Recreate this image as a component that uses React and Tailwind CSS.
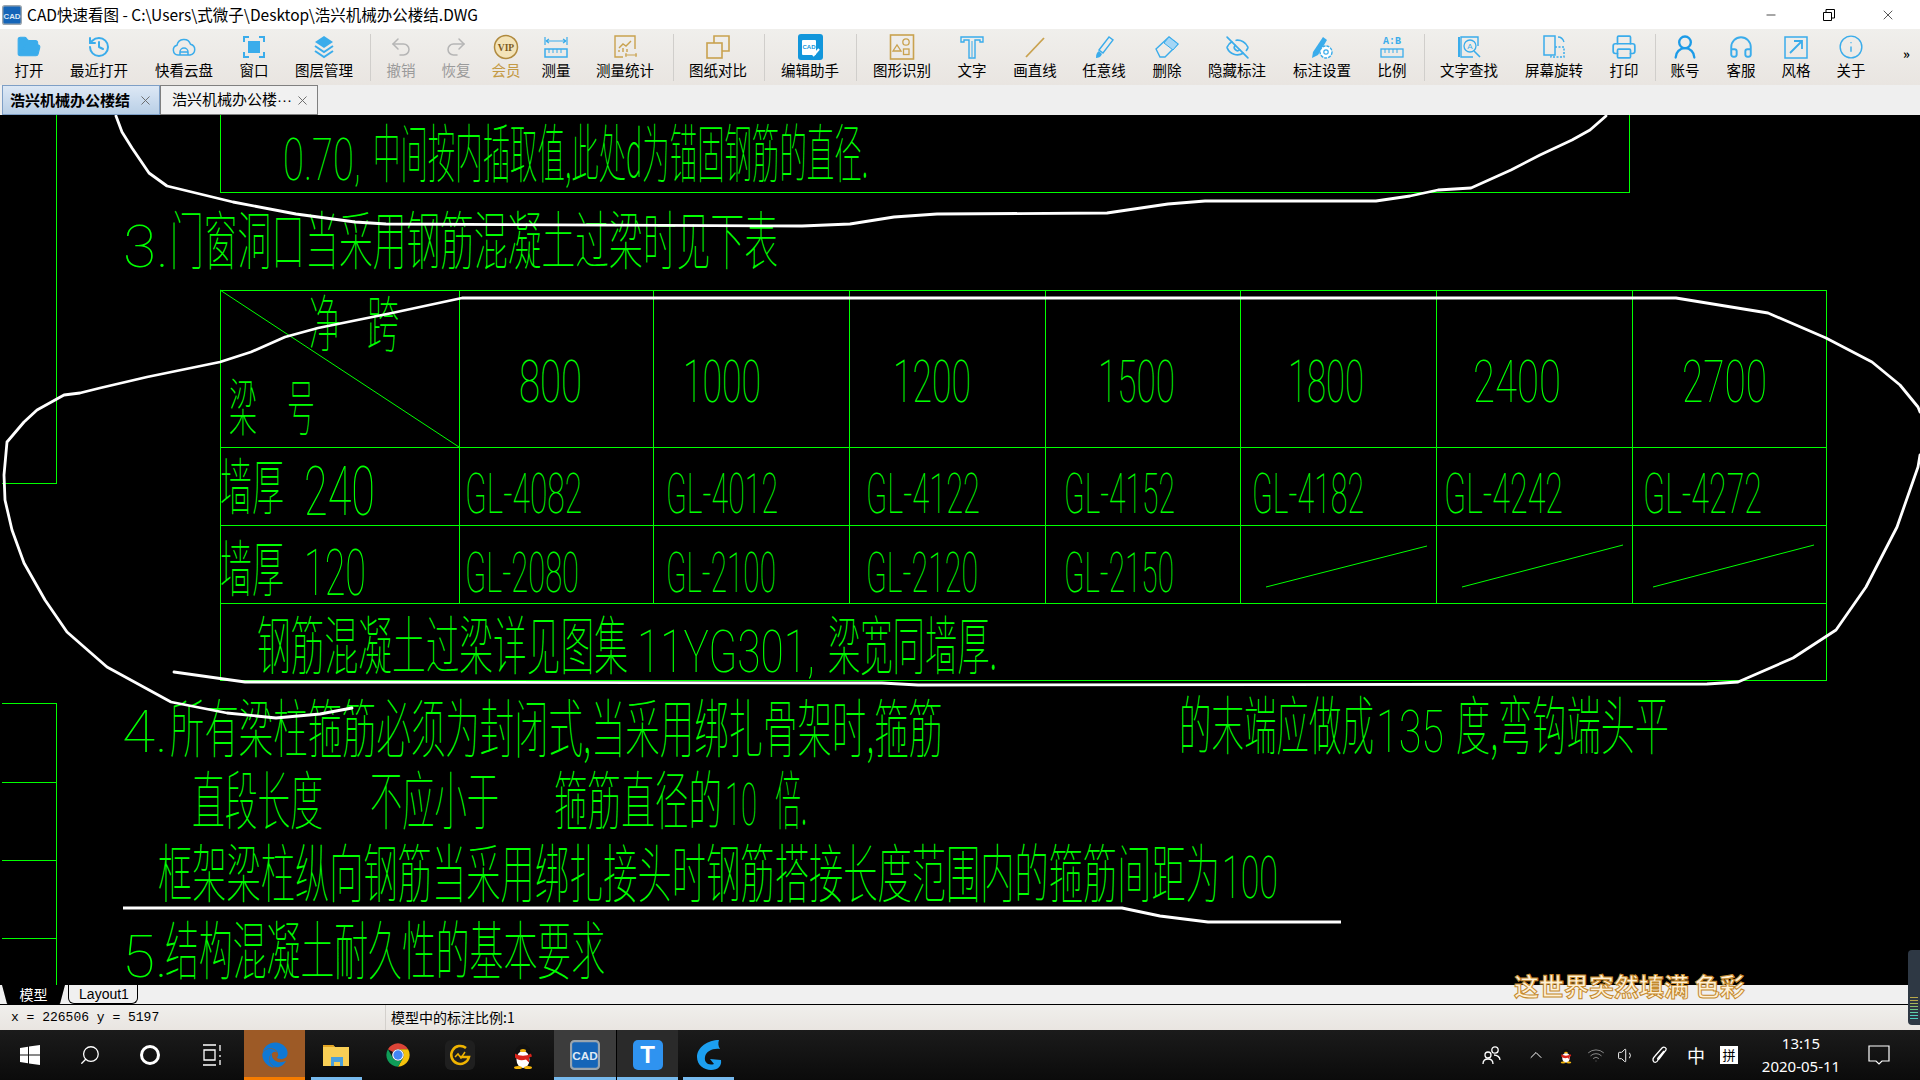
// CAD viewer window on a Windows 10 desktop
import {
  FolderOpen, History, Undo2, Redo2, EyeOff, Printer, UserRound, Headphones, Info, X, Minus,
  ChevronUp, Volume1, Search, Wifi,
} from 'lucide-react'
import { FaEdge } from 'react-icons/fa'

const UI_FONT = { fontFamily: '"Noto Sans CJK SC", "Liberation Sans", sans-serif' }
const BLUE = '#3aaceb'
const GOLD = '#c9a24f'

const Svg = ({ children, className = 'w-[26px] h-[26px]' }) => (
  <svg viewBox="0 0 26 26" className={className} fill="none" stroke={BLUE} strokeWidth="1.5">{children}</svg>
)

const icons = {
  open: <FolderOpen size={26} fill={BLUE} stroke={BLUE} strokeWidth={1} />,
  recent: <History size={24} stroke={BLUE} strokeWidth={2} />,
  cloud: (
    <Svg>
      <path d="M7 21a5 5 0 0 1-1-9.800 7 7 0 0 1 13.500-1A5.500 5.500 0 0 1 19 21Z" />
      <path d="M9 21v-3a4 4 0 0 1 8 0v3M9 18h8" />
    </Svg>
  ),
  window: (
    <Svg>
      <rect x="7" y="7" width="12" height="12" fill={BLUE} stroke="none" />
      <path d="M3 8V3h5M18 3h5v5M23 18v5h-5M8 23H3v-5" strokeWidth="2" />
    </Svg>
  ),
  layers: (
    <Svg>
      <path d="M13 2 22 8l-9 6-9-6Z" fill={BLUE} stroke="none" />
      <path d="m4 12 9 6 9-6M4 17l9 6 9-6" strokeWidth="2" />
    </Svg>
  ),
  undo: <Undo2 size={24} stroke="#b5b5b5" strokeWidth={1.5} />,
  redo: <Redo2 size={24} stroke="#b5b5b5" strokeWidth={1.5} />,
  vip: (
    <svg viewBox="0 0 26 26" className="w-[26px] h-[26px]">
      <circle cx="13" cy="13" r="11.500" fill="#f3e3b8" stroke="#b08a3e" strokeWidth="1.500" />
      <text x="13" y="16.500" textAnchor="middle" fontSize="9.500" fontWeight="700" fill="#7a5a20" fontFamily="Liberation Serif, serif">VIP</text>
    </svg>
  ),
  measure: (
    <Svg>
      <path d="M2 3v8M24 3v8M3 7h20M3 7l3-2M3 7l3 2M23 7l-3-2M23 7l-3 2" strokeWidth="1.200" />
      <rect x="2" y="15" width="22" height="8" />
      <path d="M6 15v4M10 15v4M14 15v4M18 15v4" strokeWidth="1" />
    </Svg>
  ),
  stats: (
    <svg viewBox="0 0 26 26" className="w-[26px] h-[26px]" fill="none" stroke={GOLD} strokeWidth="1.400">
      <path d="M11 23H3V2h20v13" />
      <path d="M7 14l4-4 3 2 5-5M7 18v-2M11 18v-4M15 18v-3" />
      <path d="M13 21h12M14 19v4M24 19v4" strokeWidth="1.100" />
    </svg>
  ),
  compare: (
    <svg viewBox="0 0 26 26" className="w-[26px] h-[26px]" fill="none" stroke={GOLD} strokeWidth="1.600">
      <path d="M9 9V2h15v15h-7" />
      <rect x="2" y="9" width="15" height="15" />
    </svg>
  ),
  helper: (
    <svg viewBox="0 0 26 26" className="w-[26px] h-[26px]">
      <rect x="1" y="0" width="25" height="26" rx="3" fill="#1296db" />
      <rect x="5" y="6" width="14" height="15" rx="1" fill="#fff" />
      <text x="12" y="15" textAnchor="middle" fontSize="6" fontWeight="700" fill="#1296db" fontFamily="Liberation Sans, sans-serif">CAD</text>
      <path d="m16 22 6-7" stroke="#fff" strokeWidth="2" />
    </svg>
  ),
  shapes: (
    <svg viewBox="0 0 26 26" className="w-[26px] h-[26px]" fill="none" stroke={GOLD} strokeWidth="1.300">
      <rect x="1.500" y="1" width="23" height="24" strokeWidth="1.600" />
      <path d="M4 17l4-6 4 6Z" />
      <circle cx="17" cy="8" r="3.200" />
      <rect x="14.500" y="15" width="5.500" height="5.500" />
    </svg>
  ),
  text: (
    <Svg>
      <path d="M2 8V3h22v5h-3V6h-5v18h-6V6H5v2Z" strokeWidth="1.400" />
      <path d="M13 7v16" strokeWidth="1" />
    </Svg>
  ),
  line: (
    <svg viewBox="0 0 26 26" className="w-[26px] h-[26px]">
      <path d="M4 23 22 4" stroke={GOLD} strokeWidth="1.800" />
    </svg>
  ),
  pen: (
    <Svg>
      <path d="m8 16 10-13 4 3-10 13Z" strokeWidth="1.400" />
      <path d="M8 17c-2 1-3 3-3 7 2 0 5-1 6-4Z" fill={BLUE} stroke="none" />
    </Svg>
  ),
  eraser: (
    <Svg>
      <path d="m2 15 13-12 9 7-13 13H6Z" strokeWidth="1.400" />
      <path d="m10 9 9 7 5-6-9-7Z" fill="#a5d6f5" stroke={BLUE} strokeWidth="1" />
    </Svg>
  ),
  hide: <EyeOff size={25} stroke={BLUE} strokeWidth={1.6} />,
  dimset: (
    <Svg>
      <path d="m3 24 1-6L14 3l4 3L9 21Z" fill={BLUE} stroke="none" />
      <circle cx="17" cy="18" r="6" fill="#fff" strokeWidth="1.400" strokeDasharray="3 1" />
      <circle cx="17" cy="18" r="2.200" strokeWidth="1.200" />
    </Svg>
  ),
  scale: (
    <svg viewBox="0 0 26 26" className="w-[26px] h-[26px]" fill="none" stroke={BLUE} strokeWidth="1.300">
      <text x="13" y="10" textAnchor="middle" fontSize="10" fontWeight="700" fill={BLUE} stroke="none" fontFamily="Liberation Mono, monospace">A:B</text>
      <rect x="2" y="15" width="22" height="8" />
      <path d="M6 15v4M10 15v4M14 15v4M18 15v4" strokeWidth="1" />
    </svg>
  ),
  find: (
    <Svg>
      <path d="M22 12V3H5v20h12" strokeWidth="1.400" />
      <path d="M3 3v20" strokeWidth="2" />
      <circle cx="14" cy="12" r="6" strokeWidth="1.300" />
      <text x="14" y="15" textAnchor="middle" fontSize="8" fill={BLUE} stroke="none" fontFamily="Liberation Sans, sans-serif">A</text>
      <path d="m18 17 6 6" strokeWidth="1.600" />
    </Svg>
  ),
  rotate: (
    <Svg>
      <rect x="3" y="2" width="11" height="19" />
      <path d="M14 13h9v10H10v-2" strokeDasharray="2 1.500" />
      <path d="M17 3c3 0 5 2 6 5" strokeWidth="1.300" />
    </Svg>
  ),
  print: <Printer size={26} stroke={BLUE} strokeWidth={1.6} />,
  user: <UserRound size={28} stroke="#1c9be8" strokeWidth={2} />,
  service: <Headphones size={26} stroke={BLUE} strokeWidth={1.8} />,
  style: (
    <Svg>
      <rect x="2" y="3" width="22" height="21" strokeWidth="1.500" />
      <path d="m7 19 12-12M11 7h8v8" strokeWidth="1.800" />
    </Svg>
  ),
  about: <Info size={26} stroke={BLUE} strokeWidth={1.3} />,
}

const tools = [
  { label: '打开', icon: 'open', w: 'w-[56px] ml-[1px]' },
  { label: '最近打开', icon: 'recent', w: 'w-[84px]' },
  { label: '快看云盘', icon: 'cloud', w: 'w-[86px]' },
  { label: '窗口', icon: 'window', w: 'w-[54px]' },
  { label: '图层管理', icon: 'layers', w: 'w-[86px]' },
  { sep: 'ml-[3px] mr-[2px]' },
  { label: '撤销', icon: 'undo', w: 'w-[56px]', tone: 'text-[#9a9a9a]' },
  { label: '恢复', icon: 'redo', w: 'w-[54px]', tone: 'text-[#9a9a9a]' },
  { label: '会员', icon: 'vip', w: 'w-[46px]', tone: 'text-[#c49a45]' },
  { label: '测量', icon: 'measure', w: 'w-[54px]' },
  { label: '测量统计', icon: 'stats', w: 'w-[84px]' },
  { sep: 'ml-[6px] mr-[2px]' },
  { label: '图纸对比', icon: 'compare', w: 'w-[84px]' },
  { sep: 'ml-[4px] mr-[1px]' },
  { label: '编辑助手', icon: 'helper', w: 'w-[88px]' },
  { sep: 'ml-[2px] mr-[1px]' },
  { label: '图形识别', icon: 'shapes', w: 'w-[88px]' },
  { label: '文字', icon: 'text', w: 'w-[52px]' },
  { label: '画直线', icon: 'line', w: 'w-[74px]' },
  { label: '任意线', icon: 'pen', w: 'w-[64px]' },
  { label: '删除', icon: 'eraser', w: 'w-[62px]' },
  { label: '隐藏标注', icon: 'hide', w: 'w-[78px]' },
  { label: '标注设置', icon: 'dimset', w: 'w-[92px]' },
  { label: '比例', icon: 'scale', w: 'w-[48px]' },
  { sep: 'ml-[8px] mr-[1px]' },
  { label: '文字查找', icon: 'find', w: 'w-[86px]' },
  { label: '屏幕旋转', icon: 'rotate', w: 'w-[84px]' },
  { label: '打印', icon: 'print', w: 'w-[56px]' },
  { sep: 'ml-[3px] mr-[1px]' },
  { label: '账号', icon: 'user', w: 'w-[56px]' },
  { label: '客服', icon: 'service', w: 'w-[56px]' },
  { label: '风格', icon: 'style', w: 'w-[54px]' },
  { label: '关于', icon: 'about', w: 'w-[56px]' },
]

// CAD text: real text squeezed to the width measured in the drawing
function CadText({ x, w, bottom, size, digits, children }) {
  return (
    <text
      x={x}
      y={bottom - size * (digits ? 0 : 0.1)}
      textLength={w}
      lengthAdjust="spacingAndGlyphs"
      fontSize={size}
      fontWeight="100"
      fontFamily={digits ? 'Roboto, "Liberation Sans", sans-serif' : '"Noto Sans CJK SC", sans-serif'}
      fill="#00ff00"
    >
      {children}
    </text>
  )
}

const Cjk = (p) => <CadText size={64} {...p} />
const Num = (p) => <CadText size={60} digits {...p} />

const headers = [
  ['800', 519, 63], ['1000', 683, 78], ['1200', 893, 78], ['1500', 1098, 77],
  ['1800', 1288, 76], ['2400', 1473, 88], ['2700', 1682, 85],
]
const row240 = [
  ['GL-4082', 465, 117], ['GL-4012', 666, 112], ['GL-4122', 866, 114], ['GL-4152', 1064, 111],
  ['GL-4182', 1252, 112], ['GL-4242', 1444, 119], ['GL-4272', 1643, 119],
]
const row120 = [['GL-2080', 465, 114], ['GL-2100', 666, 110], ['GL-2120', 866, 112], ['GL-2150', 1064, 110]]
const columns = [459, 653, 849, 1045, 1240, 1436, 1632]
const ticks = [782, 860, 938]

function CadDrawing() {
  return (
    <svg viewBox="0 115 1920 870" className="w-full h-full block">
      {/* frame lines */}
      <g stroke="#00ff00" strokeWidth="1" shapeRendering="crispEdges" fill="none">
        <path d="M56.500 115V483.500H2" />
        <path d="M2 703.500H56.500V985" />
        {ticks.map((y) => <path key={y} d={`M2 ${y + 0.5}H56`} />)}
        <path d="M220.500 115V192.500H1629.500V115" />
        <rect x="220.500" y="290.500" width="1606" height="390" />
        <path d="M220 447.500H1827M220 525.500H1827M220 603.500H1827" />
        {columns.map((x) => <path key={x} d={`M${x + 0.5} 290V603`} />)}
      </g>
      <g stroke="#00ff00" strokeWidth="1" fill="none">
        <path d="M220 290 459 447" />
        <path d="M1266 587 1427 546M1462 587 1623 545M1653 587 1814 545" />
      </g>

      {/* notes above the table */}
      <Num x={283} w={78} bottom={180}>0.70,</Num>
      <Cjk x={373} w={495} bottom={183}>中间按内插取值,此处d为锚固钢筋的直径.</Cjk>
      <Num x={123} w={46} bottom={267}>3.</Num>
      <Cjk x={170} w={608} bottom={270}>门窗洞口当采用钢筋混凝土过梁时见下表</Cjk>

      {/* table */}
      <CadText x={309} w={32} bottom={353} size={62}>净</CadText>
      <CadText x={367} w={32} bottom={353} size={62}>跨</CadText>
      <CadText x={229} w={28} bottom={437} size={62}>梁</CadText>
      <CadText x={287} w={28} bottom={437} size={62}>号</CadText>
      {headers.map(([t, x, w]) => <CadText key={t} digits x={x} w={w} bottom={402} size={60}>{t}</CadText>)}
      <CadText x={220} w={64} bottom={516} size={62}>墙厚</CadText>
      <Num x={304} w={71} bottom={515} size={68}>240</Num>
      {row240.map(([t, x, w]) => <CadText key={t} digits x={x} w={w} bottom={513} size={56}>{t}</CadText>)}
      <CadText x={220} w={64} bottom={598} size={62}>墙厚</CadText>
      <Num x={304} w={62} bottom={595} size={64}>120</Num>
      {row120.map(([t, x, w]) => <CadText key={t} digits x={x} w={w} bottom={592} size={56}>{t}</CadText>)}
      <Cjk x={257} w={371} bottom={675}>钢筋混凝土过梁详见图集</Cjk>
      <Num x={637} w={178} bottom={672}>11YG301,</Num>
      <Cjk x={828} w={169} bottom={675}>梁宽同墙厚.</Cjk>

      {/* notes below the table */}
      <Num x={122} w={46} bottom={752}>4.</Num>
      <Cjk x={170} w={773} bottom={758}>所有梁柱箍筋必须为封闭式,当采用绑扎骨架时,箍筋</Cjk>
      <Cjk x={1179} w={195} bottom={755}>的末端应做成</Cjk>
      <Num x={1376} w={68} bottom={752}>135</Num>
      <Cjk x={1456} w={213} bottom={755}>度,弯钩端头平</Cjk>
      <Cjk x={192} w={131} bottom={830}>直段长度</Cjk>
      <Cjk x={370} w={129} bottom={830}>不应小于</Cjk>
      <Cjk x={554} w={168} bottom={830}>箍筋直径的</Cjk>
      <Num x={725} w={32} bottom={825}>10</Num>
      <Cjk x={775} w={32} bottom={830}>倍.</Cjk>
      <Cjk x={158} w={1062} bottom={903}>框架梁柱纵向钢筋当采用绑扎接头时钢筋搭接长度范围内的箍筋间距为</Cjk>
      <Num x={1222} w={56} bottom={898}>100</Num>
      <Num x={122} w={46} bottom={977}>5.</Num>
      <Cjk x={165} w={440} bottom={980}>结构混凝土耐久性的基本要求</Cjk>

      {/* hand drawn white strokes */}
      <g fill="none" stroke="#fff" strokeLinejoin="round" strokeLinecap="round">
        <polyline strokeWidth="2.800" points="116,116 122,132 132,148 149,173 167,186 233,202 296,214 355,222 386,224 802,226 850,224 894,217 937,214 1107,213 1168,204 1205,201 1376,201 1410,196 1438,190 1471,188 1511,170 1540,155 1572,140 1590,130 1606,116" />
        <polyline strokeWidth="2.800" points="1920,412 1918,407 1900,385 1872,362 1826,338 1768,313 1676,298 462,298 392,313 318,328 285,337 251,352 220,362 147,377 100,388 80,393 64,395 37,410 24,422 7,442 4,475 5,500 12,530 24,563 45,600 67,632 107,667 171,702 227,713 276,718 320,714 352,708" />
        <polyline strokeWidth="2.800" points="1920,455 1918,467 1897,527 1866,587 1836,630 1793,658 1738,682 1707,684 918,685 882,683 245,682 174,672" />
        <polyline strokeWidth="3" strokeLinecap="butt" points="123,908 1122,908 1160,916 1208,922 1341,922" />
      </g>
    </svg>
  )
}

function Tool({ label, icon, w, tone = 'text-black' }) {
  return (
    <div className={`${w} shrink-0 flex flex-col items-center`}>
      <div className="h-[26px] flex items-center justify-center">{icons[icon]}</div>
      <span className={`text-[14.5px] leading-[20px] whitespace-nowrap ${tone}`}>{label}</span>
    </div>
  )
}

function Penguin({ className }) {
  return (
    <svg viewBox="0 0 24 28" className={className}>
      <ellipse cx="12" cy="15" rx="9" ry="12" fill="#111" />
      <ellipse cx="12" cy="18" rx="6.500" ry="8.500" fill="#fff" />
      <ellipse cx="12" cy="9" rx="3" ry="1.600" fill="#f5b50a" />
      <path d="M4 12c5 3 11 3 16 0l1 3-3 1v5l-3-3c-3 1-6 1-8 0l-3-2Z" fill="#d8231a" />
      <ellipse cx="7" cy="26" rx="4" ry="1.600" fill="#f5b50a" />
      <ellipse cx="17" cy="26" rx="4" ry="1.600" fill="#f5b50a" />
    </svg>
  )
}

function TaskCell({ w, bg = '', line = '', children }) {
  return (
    <div className={`${w} ${bg} h-full relative shrink-0 flex items-center justify-center`}>
      {children}
      {line && <div className={`absolute bottom-0 h-[3px] ${line}`} />}
    </div>
  )
}

function CadLogo({ className }) {
  return (
    <svg viewBox="0 0 28 28" className={className}>
      <rect x="1" y="1" width="26" height="26" rx="3" fill="#1565b8" stroke="#9aa5ae" strokeWidth="2" />
      <text x="14" y="19" textAnchor="middle" fontSize="11" fontWeight="700" fill="#dfe9f5" fontFamily="Liberation Sans, sans-serif">CAD</text>
    </svg>
  )
}

export default function App() {
  return (
    <div className="w-[1920px] h-[1080px] relative overflow-hidden flex flex-col bg-black" style={UI_FONT}>
      {/* title bar */}
      <div className="h-[29px] bg-white flex items-center shrink-0">
        <CadLogo className="w-[20px] h-[20px] ml-[2px]" />
        <span className="ml-[5px] text-[15.5px] text-black whitespace-nowrap">CAD快速看图 - C:\Users\式微子\Desktop\浩兴机械办公楼结.DWG</span>
        <div className="ml-auto flex items-center h-full text-black">
          <div className="w-[58px] flex justify-center"><Minus size={14} strokeWidth={1.2} /></div>
          <div className="w-[58px] flex justify-center">
            <svg viewBox="0 0 12 12" className="w-[12px] h-[12px]" fill="none" stroke="#000"><path d="M.5 3.500h8v8h-8ZM3 3V.5h8.500V9H9" /></svg>
          </div>
          <div className="w-[60px] flex justify-center mr-[2px]"><X size={16} strokeWidth={1} /></div>
        </div>
      </div>

      {/* toolbar */}
      <div className="h-[56px] shrink-0 flex items-start pt-[5px] bg-gradient-to-b from-[#f0efec] to-[#e9e5e1]">
        {tools.map((t, i) =>
          t.sep ? (
            <div key={i} className={`w-px h-[47px] bg-[#d0cecb] shrink-0 ${t.sep}`} />
          ) : (
            <Tool key={t.label} {...t} />
          ),
        )}
        <span className="ml-[24px] mt-[13px] text-[13px] font-bold leading-none text-black">»</span>
      </div>

      {/* document tabs */}
      <div className="h-[30px] shrink-0 bg-[#efefef] flex items-stretch pl-[2px]">
        <div className="w-[158px] border border-[#7e9fc6] bg-gradient-to-b from-[#dde8f5] to-[#b9cfe6] flex items-center pl-[7px] overflow-hidden">
          <span className="w-[124px] overflow-hidden whitespace-nowrap text-[15px] font-bold text-black">浩兴机械办公楼结</span>
          <X size={15} stroke="#666" strokeWidth={1.5} className="ml-[4px] shrink-0" />
        </div>
        <div className="w-[158px] border border-[#808080] bg-[#f1f1f1] flex items-center pl-[11px]">
          <span className="w-[122px] whitespace-nowrap text-[15px] text-black">浩兴机械办公楼<span style={{ fontFamily: '"Liberation Sans", sans-serif' }}>···</span></span>
          <X size={15} stroke="#666" strokeWidth={1.5} className="ml-[1px] shrink-0" />
        </div>
      </div>

      {/* drawing area */}
      <div className="h-[870px] shrink-0 bg-black">
        <CadDrawing />
      </div>

      {/* model tabs */}
      <div className="h-[20px] shrink-0 bg-[#f0f0f0] border-b border-black flex items-stretch pl-[2px]">
        <div className="w-[63px] bg-black text-white text-[14px] leading-[19px] text-center rounded-b-[6px] [clip-path:polygon(0_0,100%_0,92%_100%,8%_100%)]">模型</div>
        <div className="w-[70px] ml-[3px] border-x border-b border-black rounded-b-[6px] text-[14px] leading-[19px] text-center text-black pl-[2px]" style={{ fontFamily: '"Liberation Sans", sans-serif' }}>Layout1</div>
      </div>

      {/* status bar */}
      <div className="h-[25px] shrink-0 bg-gradient-to-b from-[#f0efec] to-[#e9e5e1] flex items-center">
        <span className="w-[385px] pl-[11px] text-[13px] text-black" style={{ fontFamily: '"Liberation Mono", monospace' }}>x = 226506 y = 5197</span>
        <div className="w-px h-full bg-[#d3d0cc]" />
        <span className="ml-[5px] text-[14px] text-black">模型中的标注比例:1</span>
      </div>

      {/* taskbar */}
      <div className="h-[50px] shrink-0 flex items-center text-white bg-gradient-to-b from-[#1b1b1b] to-[#0b0b0b]">
        <TaskCell w="w-[60px]">
          <svg viewBox="0 0 20 20" className="w-[20px] h-[20px]" fill="#fff"><path d="M0 3l8-1.200V9.500H0ZM9 1.600 20 0v9.500H9ZM0 10.500h8v7.700L0 17ZM9 10.500h11V20L9 18.400Z" /></svg>
        </TaskCell>
        <TaskCell w="w-[60px]"><Search size={22} strokeWidth={1.4} className="-scale-x-100" /></TaskCell>
        <TaskCell w="w-[60px]"><div className="w-[20px] h-[20px] rounded-full border-[3px] border-white" /></TaskCell>
        <TaskCell w="w-[64px]">
          <svg viewBox="0 0 22 22" className="w-[22px] h-[22px]" fill="none" stroke="#fff" strokeWidth="1.300"><path d="M2 1h13M2 21h13M3 6h11v10H3ZM19 1v6M19 11v2M19 16v5" /></svg>
        </TaskCell>
        <TaskCell w="w-[61px]" bg="bg-[#9d5a26]" line="left-0 right-0 bg-[#f57c00]"><FaEdge size={26} color="#0f78d4" /></TaskCell>
        <TaskCell w="w-[62px]" line="left-[6px] right-[5px] bg-[#76b9ed]">
          <svg viewBox="0 0 28 26" className="w-[28px] h-[26px]">
            <path d="M1 3h10l2 2h14v19H1Z" fill="#f9cf55" />
            <path d="M1 3h10l2 2H1Z" fill="#e2a423" />
            <rect x="9" y="15" width="12" height="9" fill="#4aa0dc" />
            <rect x="12" y="20" width="6" height="4" fill="#f9cf55" />
          </svg>
        </TaskCell>
        <TaskCell w="w-[62px]">
          <svg viewBox="0 0 24 24" className="w-[28px] h-[28px]">
            <path d="M3.340 7A10 10 0 0 1 20.660 7H12A5 5 0 0 0 7.670 9.500L3.340 7Z" fill="#db4437" />
            <path d="M20.660 7A10 10 0 0 1 12 22L16.330 14.500A5 5 0 0 0 12 7Z" fill="#f4c20d" />
            <path d="M3.340 7A10 10 0 0 0 12 22L16.330 14.500A5 5 0 0 1 7.670 14.500Z" fill="#0f9d58" />
            <circle cx="12" cy="12" r="5" fill="#fff" />
            <circle cx="12" cy="12" r="4" fill="#4285f4" />
          </svg>
        </TaskCell>
        <TaskCell w="w-[62px]">
          <svg viewBox="0 0 30 30" className="w-[30px] h-[30px]">
            <rect width="30" height="30" rx="6" fill="#1f1f1f" />
            <path d="M21 8a9 9 0 1 0 3 9H15" fill="none" stroke="#f0b400" strokeWidth="2.500" />
            <path d="m10 17 3-3 3 4 4-6" fill="none" stroke="#f0b400" strokeWidth="1.500" />
          </svg>
        </TaskCell>
        <TaskCell w="w-[63px]"><Penguin className="w-[24px] h-[29px]" /></TaskCell>
        <TaskCell w="w-[62px]" bg="bg-[#3c3c3c]" line="left-0 right-0 bg-[#76b9ed]"><CadLogo className="w-[30px] h-[30px]" /></TaskCell>
        <TaskCell w="w-[62px]" bg="bg-[#2a2a2a] border-l border-black" line="left-0 right-0 bg-[#76b9ed]">
          <div className="w-[30px] h-[30px] rounded-[5px] bg-[#2f93f0] flex items-center justify-center text-white text-[24px] font-bold leading-none" style={{ fontFamily: '"Liberation Sans", sans-serif' }}>T</div>
        </TaskCell>
        <TaskCell w="w-[61px]" line="left-[5px] right-[5px] bg-[#76b9ed]">
          <svg viewBox="0 0 30 32" className="w-[30px] h-[32px]">
            <path d="M25 1C14 1 3 8 3 18c0 8 7 13 14 13 7 0 11-4 10-10l-11-1 4 5c-6 2-10-2-9-7 1-6 8-9 15-8-2-3-2-6-1-9Z" fill="#1c9ff0" />
          </svg>
        </TaskCell>

        {/* system tray */}
        <div className="ml-auto flex items-center h-full relative">
          <div className="w-[44px] mr-[7px] flex justify-center">
            <svg viewBox="0 0 20 20" className="w-[20px] h-[20px]" fill="none" stroke="#fff" strokeWidth="1.300"><circle cx="13" cy="5" r="3.200" /><circle cx="6" cy="10" r="3" /><path d="M1 19c0-3 2-5 5-5s5 2 5 5M12 10c3 0 6 2 6 5" /></svg>
          </div>
          <div className="w-[30px] flex justify-center"><ChevronUp size={20} strokeWidth={1.200} /></div>
          <div className="w-[30px] flex justify-center"><Penguin className="w-[14px] h-[17px]" /></div>
          <div className="w-[30px] flex justify-center"><Wifi size={18} strokeWidth={1.300} stroke="#8a8a8a" /></div>
          <div className="w-[30px] flex justify-center"><Volume1 size={19} strokeWidth={1.200} /></div>
          <div className="w-[40px] flex justify-center">
            <svg viewBox="0 0 20 20" className="w-[20px] h-[20px]" fill="none" stroke="#fff" strokeWidth="1.300"><path d="M3 17c-2-2-1-4 1-6l7-8c2-2 5 0 4 2l-7 9c-1 1-2 0-1-1l6-7M3 17c2 1 3 0 4-2" /></svg>
          </div>
          <span className="w-[30px] text-center text-[18px]">中</span>
          <div className="w-[36px] flex justify-center">
            <span className="w-[18px] h-[18px] bg-white text-black text-[13px] leading-[18px] text-center">拼</span>
          </div>
          <div className="w-[100px] flex flex-col items-center text-[15px] leading-[23px] ml-[4px]" style={{ fontFamily: '"Noto Sans", sans-serif' }}>
            <span>13:15</span>
            <span>2020-05-11</span>
          </div>
          <div className="w-[56px] flex justify-center">
            <svg viewBox="0 0 22 22" className="w-[22px] h-[22px]" fill="none" stroke="#fff" strokeWidth="1.200"><path d="M1 2h20v15h-7l-3 3-3-3H1Z" /></svg>
          </div>
          <div className="w-[13px]" />
        </div>
      </div>

      {/* desktop lyrics over the window */}
      <div className="absolute left-[1514px] top-[970px] text-[25px] leading-[30px] font-bold text-[#fff1d6] whitespace-nowrap [-webkit-text-stroke:1px_#c58a2e]">这世界突然填满 色彩</div>

      {/* volume meter widget at the screen edge */}
      <div className="absolute left-[1908px] top-[950px] w-[14px] h-[75px] rounded-l-[4px] bg-[#2e3844] flex flex-col justify-end gap-[2px] pb-[6px] pl-[2px]">
        <div className="w-[8px] h-[1px] bg-[#b8a84a]" />
        <div className="w-[8px] h-[1px] bg-[#b8a84a]" />
        <div className="w-[8px] h-[1px] bg-[#a8b85a]" />
        <div className="w-[8px] h-[1px] bg-[#8fc06a]" />
        <div className="w-[8px] h-[1px] bg-[#6fc88a]" />
        <div className="w-[8px] h-[1px] bg-[#5fd0a8]" />
        <div className="w-[8px] h-[1px] bg-[#4fd0c0]" />
        <div className="w-[8px] h-[1px] bg-[#4fd0c0]" />
      </div>
    </div>
  )
}
